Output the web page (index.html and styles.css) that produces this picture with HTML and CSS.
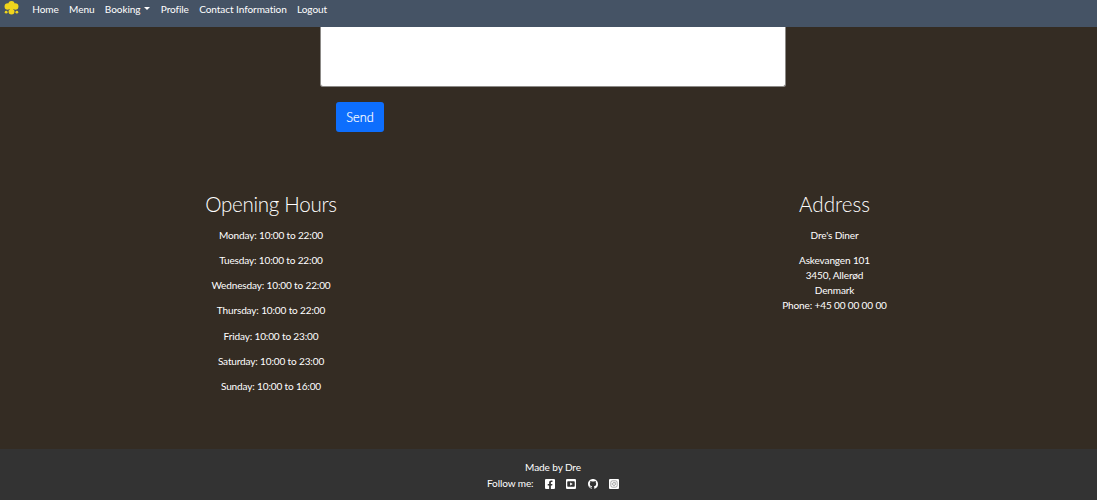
FILE: index.html
```
<!DOCTYPE html>
<html lang="en">
<head>
<meta charset="utf-8">
<title>Dre's Diner</title>
<link rel="stylesheet" href="styles.css">
</head>
<body>
<div class="page">
  <nav class="navbar">
    <svg class="logo" viewBox="0 0 16 16" aria-hidden="true">
      <g fill="#f0d51c"><circle cx="8" cy="4.4" r="3.3"/><circle cx="4.1" cy="7" r="3.5"/><circle cx="11.9" cy="7" r="3.5"/><circle cx="8" cy="12.2" r="3.2"/><circle cx="2.3" cy="13" r="1.5"/><circle cx="13.7" cy="13" r="1.5"/><circle cx="8" cy="7.5" r="3"/></g>
      <path d="M4.6 11.2 5.8 9.8M11.4 11.2l-1.2-1.4" stroke="#455365" stroke-width=".8"/>
    </svg>
    <a class="link">Home</a>
    <a class="link">Menu</a>
    <a class="link">Booking<span class="caret"></span></a>
    <a class="link">Profile</a>
    <a class="link">Contact Information</a>
    <a class="link">Logout</a>
  </nav>
  <main class="content">
    <form class="contact">
      <div class="message"></div>
      <button class="send" type="button">Send</button>
    </form>
    <div class="info">
      <section class="column">
        <h2>Opening Hours</h2>
        <p>Monday: 10:00 to 22:00</p>
        <p>Tuesday: 10:00 to 22:00</p>
        <p>Wednesday: 10:00 to 22:00</p>
        <p>Thursday: 10:00 to 22:00</p>
        <p>Friday: 10:00 to 23:00</p>
        <p>Saturday: 10:00 to 23:00</p>
        <p>Sunday: 10:00 to 16:00</p>
      </section>
      <section class="column">
        <h2>Address</h2>
        <p>Dre's Diner</p>
        <p>Askevangen 101<br>3450, Allerød<br>Denmark<br>Phone: +45 00 00 00 00</p>
      </section>
    </div>
  </main>
  <footer class="footer">
    <div class="credit">Made by Dre</div>
    <div class="follow">
      <span class="label">Follow me:</span>
      <svg class="social" viewBox="0 0 448 448"><path fill="#fff" d="M400 0H48A48 48 0 0 0 0 48v352a48 48 0 0 0 48 48h137V296h-63v-72h63v-55c0-62 37-97 94-97 27 0 55 5 55 5v61h-31c-31 0-40 19-40 39v47h69l-11 72h-58v152h137a48 48 0 0 0 48-48V48a48 48 0 0 0-48-48z"/></svg>
      <svg class="social" viewBox="0 0 448 448"><path fill="#fff" fill-rule="evenodd" d="M48 0h352a48 48 0 0 1 48 48v352a48 48 0 0 1-48 48H48a48 48 0 0 1-48-48V48A48 48 0 0 1 48 0zM104 96c-35 0-48 20-48 60v136c0 40 13 60 48 60h240c35 0 48-20 48-60V156c0-40-13-60-48-60zM184 154l122 70-122 70z"/></svg>
      <svg class="social" viewBox="0 0 16 16"><path fill="#fff" d="M8 0C3.58 0 0 3.58 0 8c0 3.54 2.29 6.53 5.47 7.59.4.07.55-.17.55-.38 0-.19-.01-.82-.01-1.49-2.01.37-2.53-.49-2.69-.94-.09-.23-.48-.94-.82-1.13-.28-.15-.68-.52-.01-.53.63-.01 1.08.58 1.23.82.72 1.21 1.87.87 2.33.66.07-.52.28-.87.51-1.07-1.78-.2-3.64-.89-3.64-3.95 0-.87.31-1.59.82-2.15-.08-.2-.36-1.02.08-2.12 0 0 .67-.21 2.2.82a7.6 7.6 0 0 1 4 0c1.53-1.04 2.2-.82 2.2-.82.44 1.1.16 1.92.08 2.12.51.56.82 1.27.82 2.15 0 3.07-1.87 3.75-3.65 3.95.29.25.54.73.54 1.48 0 1.07-.01 1.93-.01 2.2 0 .21.15.46.55.38A8 8 0 0 0 16 8c0-4.42-3.58-8-8-8z"/></svg>
      <svg class="social" viewBox="0 0 448 448"><rect width="448" height="448" rx="48" fill="#fff"/><g fill="none" stroke="#777" stroke-width="28"><rect x="82" y="82" width="284" height="284" rx="72"/><circle cx="224" cy="224" r="66"/></g><circle cx="302" cy="147" r="18" fill="#777"/></svg>
    </div>
  </footer>
</div>
</body>
</html>
```
FILE: styles.css
```
* { box-sizing: border-box; }

body {
  margin: 0;
  background: #fff;
  color: #fff;
  font-family: Lato, "Liberation Sans", sans-serif;
  font-size: 10.06px;
  line-height: 1.5;
  overflow: hidden;
}

.page {
  width: 1097px;
  height: 500px;
  display: flex;
  flex-direction: column;
  background: #342c23;
}

.navbar {
  flex: 0 0 27px;
  display: flex;
  align-items: flex-start;
  gap: 10.3px;
  padding: 2px 4px;
  background: #455365;
  letter-spacing: -0.07px;
}

.logo {
  width: 15px;
  height: 15px;
  margin: -2px 3px 0 0;
}

.caret {
  display: inline-block;
  margin-left: 4px;
  vertical-align: 3px;
  border: 3px solid transparent;
  border-top-color: #fff;
  border-bottom: 0;
}

.content {
  flex: 1;
}

.contact {
  width: 466px;
  margin-left: 320px;
}

.message {
  height: 60px;
  background: #fff;
  border: 1px solid #8c8a87;
  border-top: 0;
  border-radius: 0 0 3px 3px;
}

.send {
  display: block;
  width: 48px;
  height: 30.5px;
  margin: 14.5px 0 0 16px;
  padding: 0;
  border: 0;
  border-radius: 3px;
  background: #0d6efd;
  color: #fff;
  font: 300 12.7px/30px Lato, sans-serif;
  -webkit-text-stroke: 0.2px #fff;
}

.info {
  display: flex;
  justify-content: space-between;
  padding: 60.4px 0 0;
}

.column {
  width: 542px;
  text-align: center;
  letter-spacing: -0.15px;
}

.column:last-child {
  width: 525px;
  letter-spacing: -0.14px;
}

.column h2 {
  margin: 0 0 10.6px;
  font-size: 20.6px;
  font-weight: 300;
  line-height: 25px;
  letter-spacing: -0.3px;
}

.column:last-child h2 {
  letter-spacing: 0;
}

.column p {
  margin: 0 0 10.07px;
}

.footer {
  flex: 0 0 51px;
  padding-top: 11px;
  background: #333;
  text-align: center;
  letter-spacing: -0.1px;
}

.credit {
  padding-left: 9px;
}

.follow {
  display: flex;
  justify-content: center;
  align-items: center;
  gap: 11.4px;
  padding: 1px 0 0 9px;
}

.social {
  width: 10px;
  height: 10px;
}
```
